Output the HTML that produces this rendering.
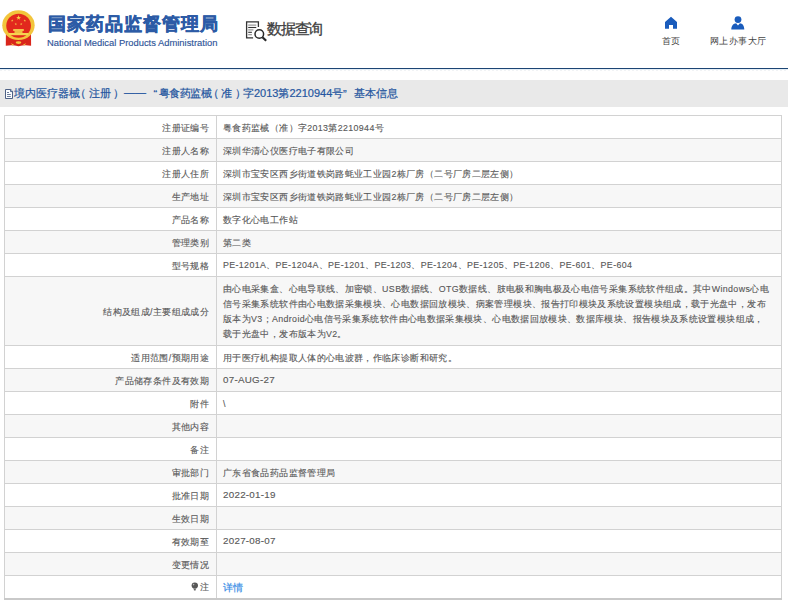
<!DOCTYPE html>
<html><head><meta charset="utf-8">
<style>
*{margin:0;padding:0;box-sizing:border-box}
html,body{width:788px;height:607px;overflow:hidden;background:#fff;font-family:"Liberation Sans",sans-serif;}
.abs{position:absolute;white-space:nowrap}
#title{left:47.5px;top:11.8px;font-size:18px;letter-spacing:1px;font-weight:bold;color:#2c5ba6;-webkit-text-stroke:0.5px #2c5ba6}
#entitle{left:47px;top:37px;font-size:9.4px;color:#2f5599;-webkit-text-stroke:0.15px #2f5599}
#sjcx{left:267px;top:20px;font-size:15px;letter-spacing:-1.2px;color:#3d3d3d;-webkit-text-stroke:0.3px #3d3d3d}
.nav{font-size:9.3px;letter-spacing:0.3px;color:#444}
#line{left:0;top:68px;width:788px;height:1px;background:#1c4574}
#bar{left:0;top:80px;width:788px;height:27px;background:#e9e9e9}
.cr{top:86px;font-size:11px;color:#2556a0;-webkit-text-stroke:0.2px #2556a0}
table{position:absolute;left:4px;top:115px;width:778px;border-collapse:collapse;table-layout:fixed}
td{border:1px solid #d2d2d2;height:23px;font-size:8.85px;letter-spacing:0.36px;color:#585858;padding:2px 6px 0 6px;-webkit-text-stroke:0.12px #585858;white-space:nowrap;line-height:14.8px}
td.n{font-size:9.8px;letter-spacing:0.26px;padding-top:0}
td.p{padding-top:0}
td.l{text-align:right;padding-right:7px;width:212px;letter-spacing:0.36px}
tr:nth-child(even) td{background:#f7f7f7}
tr:last-child td{border-bottom:2px solid #c9c9c9}
</style></head><body>
<svg class="abs" style="left:0;top:0" width="38" height="50" viewBox="0 0 38 50">
  <path d="M5.9 34 L5.8 45.8 Q12 44.6 18.5 46.2 Q25 44.6 31.1 45.8 L31 34 Z" fill="#d9261c"/>
  <ellipse cx="18.45" cy="25.2" rx="16.2" ry="14.9" fill="#f2c53c"/>
  <ellipse cx="18.6" cy="25.7" rx="12.35" ry="12" fill="#e2281d"/>
  <path d="M18.60 15.10L19.18 16.90L21.07 16.90L19.54 18.01L20.13 19.80L18.60 18.69L17.07 19.80L17.66 18.01L16.13 16.90L18.02 16.90ZM12.20 19.30L12.49 20.20L13.44 20.20L12.67 20.75L12.96 21.65L12.20 21.10L11.44 21.65L11.73 20.75L10.96 20.20L11.91 20.20ZM24.80 19.30L25.09 20.20L26.04 20.20L25.27 20.75L25.56 21.65L24.80 21.10L24.04 21.65L24.33 20.75L23.56 20.20L24.51 20.20ZM15.80 22.80L16.09 23.70L17.04 23.70L16.27 24.25L16.56 25.15L15.80 24.60L15.04 25.15L15.33 24.25L14.56 23.70L15.51 23.70ZM21.20 22.80L21.49 23.70L22.44 23.70L21.67 24.25L21.96 25.15L21.20 24.60L20.44 25.15L20.73 24.25L19.96 23.70L20.91 23.70Z" fill="#f7d24a"/>
  <path d="M13.2 29.1h10.6v1.8H13.2z" fill="#f6d350"/>
  <path d="M14.5 30.9h8v2.1h-8z" fill="#eec043"/>
  <path d="M8.9 33h19.4v2.2H8.9z" fill="#f6d350"/>
    <path d="M9 40.3 Q18.5 44 28 40.3 L27.5 41.8 Q18.5 45.5 9.5 41.8Z" fill="#d9261c"/>
  <ellipse cx="18.5" cy="42.6" rx="2.8" ry="1.4" fill="#f2c53c"/>
  <path d="M10.8 43.2 L14 44.6 L12.6 45.6 Z M26.2 43.2 L23 44.6 L24.4 45.6Z" fill="#f2c53c"/>
</svg>
<div id="title" class="abs">国家药品监督管理局</div>
<div id="entitle" class="abs">National Medical Products Administration</div>
<svg class="abs" style="left:240px;top:15px" width="32" height="30" viewBox="240 15 32 30">
  <path d="M253.1 37.9H246.6V21.9H258.4V26.9" fill="none" stroke="#333" stroke-width="1.3"/>
  <path d="M248.2 25.1h8.1" stroke="#888" stroke-width="1.1"/>
  <path d="M248.2 27.5h8.1" stroke="#333" stroke-width="1.1"/>
  <path d="M248.2 29.9h5.2" stroke="#888" stroke-width="1.1"/>
  <path d="M248.2 32.3h3.7" stroke="#333" stroke-width="1.1"/>
  <path d="M248.2 34.7h3.7" stroke="#888" stroke-width="1.1"/>
  <circle cx="259.3" cy="34" r="4.3" fill="none" stroke="#2a2a2a" stroke-width="1.5"/>
  <path d="M262.4 37.2l3.8 3.6" stroke="#2a2a2a" stroke-width="2.2"/>
</svg>
<div id="sjcx" class="abs">数据查询</div>
<svg class="abs" style="left:650px;top:10px" width="110" height="25" viewBox="650 10 110 25">
  <path d="M665 22L671 16.8L677 22V28.7H673V24.9H669V28.7H665Z" fill="#1a5cbc"/>
  <circle cx="738" cy="19.6" r="3.4" fill="#1a5cbc"/>
  <path d="M731.3 29.6C731.3 25.5 733.5 23.6 736.1 23.2L738 25.6L739.9 23.2C742.5 23.6 744.3 25.5 744.3 29.6Z" fill="#1a5cbc"/>
</svg>
<div class="abs nav" style="left:662px;top:34.8px">首页</div>
<div class="abs nav" style="left:710px;top:34.8px;letter-spacing:0.42px">网上办事大厅</div>
<div id="line" class="abs"></div>
<div class="abs" style="left:0;top:69px;width:788px;height:1px;background:#e4eef6"></div>
<div class="abs" style="left:0;top:70px;width:788px;height:1px;background:repeating-linear-gradient(90deg,#f1f3f5 0 2px,#fff 2px 4px)"></div>
<div id="bar" class="abs"></div>
<svg class="abs" style="left:0;top:80px" width="20" height="27" viewBox="0 80 20 27">
  <path d="M5.5 89.5H10.8L12.5 91.2V98.5H5.5Z" fill="#fbfdff" stroke="#45597e" stroke-width="0.95"/>
  <path d="M10.6 89.6V91.6H12.4" fill="#c8d6ea" stroke="#34507e" stroke-width="0.9"/>
  <path d="M7 92.5h2M7 94.5h3.8M7 96.5h3.8" stroke="#5b6d90" stroke-width="0.9"/>
</svg>
<div class="abs cr" style="left:14px">境内医疗器械</div>
<div class="abs cr" style="left:75px">（</div>
<div class="abs cr" style="left:88.5px">注册</div>
<div class="abs cr" style="left:113px">）</div>
<div class="abs cr" style="left:124px">——</div>
<div class="abs cr" style="left:153.5px;top:88px">“</div>
<div class="abs cr" style="left:158.5px;letter-spacing:-0.35px">粤食药监械</div>
<div class="abs cr" style="left:208px">（</div>
<div class="abs cr" style="left:220.5px">准</div>
<div class="abs cr" style="left:234.7px">）</div>
<div class="abs cr" style="left:243px">字2013第2210944号</div>
<div class="abs cr" style="left:343px;top:88px">”</div>
<div class="abs cr" style="left:354px">基本信息</div>
<table>
<tr><td class="l">注册证编号</td><td>粤食药监械（准）字2013第2210944号</td></tr>
<tr><td class="l">注册人名称</td><td>深圳华清心仪医疗电子有限公司</td></tr>
<tr><td class="l">注册人住所</td><td>深圳市宝安区西乡街道铁岗路蚝业工业园2栋厂房（二号厂房二层左侧）</td></tr>
<tr><td class="l">生产地址</td><td>深圳市宝安区西乡街道铁岗路蚝业工业园2栋厂房（二号厂房二层左侧）</td></tr>
<tr><td class="l">产品名称</td><td>数字化心电工作站</td></tr>
<tr><td class="l">管理类别</td><td>第二类</td></tr>
<tr><td class="l">型号规格</td><td class="p">PE-1201A、PE-1204A、PE-1201、PE-1203、PE-1204、PE-1205、PE-1206、PE-601、PE-604</td></tr>
<tr><td class="l" style="height:69px">结构及组成/主要组成成分</td><td>由心电采集盒、心电导联线、加密锁、USB数据线、OTG数据线、肢电极和胸电极及心电信号采集系统软件组成。其中Windows心电<br>信号采集系统软件由心电数据采集模块、心电数据回放模块、病案管理模块、报告打印模块及系统设置模块组成，载于光盘中，发布<br>版本为V3；Android心电信号采集系统软件由心电数据采集模块、心电数据回放模块、数据库模块、报告模块及系统设置模块组成，<br>载于光盘中，发布版本为V2。</td></tr>
<tr><td class="l">适用范围/预期用途</td><td>用于医疗机构提取人体的心电波群，作临床诊断和研究。</td></tr>
<tr><td class="l">产品储存条件及有效期</td><td class="n">07-AUG-27</td></tr>
<tr><td class="l">附件</td><td>\</td></tr>
<tr><td class="l">其他内容</td><td></td></tr>
<tr><td class="l">备注</td><td></td></tr>
<tr><td class="l">审批部门</td><td>广东省食品药品监督管理局</td></tr>
<tr><td class="l">批准日期</td><td class="n">2022-01-19</td></tr>
<tr><td class="l">生效日期</td><td></td></tr>
<tr><td class="l">有效期至</td><td class="n">2027-08-07</td></tr>
<tr><td class="l">变更情况</td><td></td></tr>
<tr><td class="l"><svg width="8" height="9" viewBox="0 0 8 9" style="vertical-align:-1px;margin-right:1px"><ellipse cx="3.8" cy="3.5" rx="3.2" ry="3.1" fill="#575757"/><path d="M2.6 6.5h2.4l-0.4 2h-1.6z" fill="#666"/><circle cx="2.6" cy="2.6" r="0.8" fill="#bbb"/></svg>注</td><td style="color:#3a8ee6;font-size:10px;letter-spacing:0;padding-top:3px;-webkit-text-stroke:0.2px #3a8ee6">详情</td></tr>
</table>
</body></html>
